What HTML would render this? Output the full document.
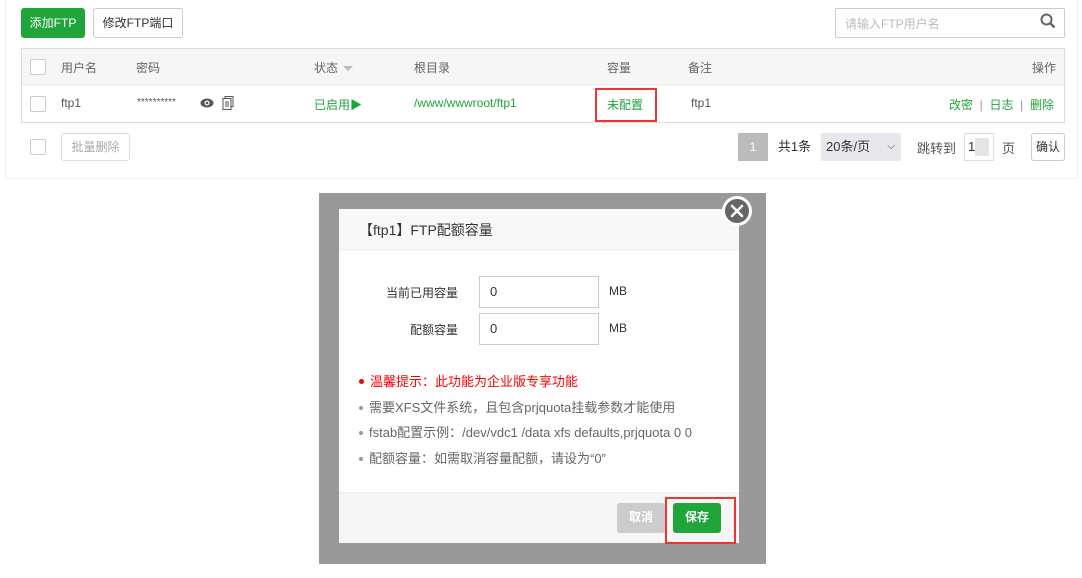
<!DOCTYPE html>
<html><head><meta charset="utf-8"><style>
*{box-sizing:border-box;margin:0;padding:0}
body{width:1082px;height:578px;background:#fff;font-family:"Liberation Sans","Noto Sans CJK SC",sans-serif;font-size:12px;color:#555;position:relative;overflow:hidden}
.a{position:absolute}
.panel{left:5px;top:-2px;width:1073px;height:181px;border:1px solid #eee;border-radius:3px;background:#fff}
.btn{position:absolute;height:30px;line-height:28px;border-radius:3px;font-size:12px;text-align:center}
.cb{position:absolute;width:16px;height:16px;border:1px solid #ccc;border-radius:2px;background:#fff}
.g{color:#20a53a}
.note{position:absolute;left:357px;font-size:13px;color:#666;line-height:18px}
.note b{display:inline-block;width:4px;height:4px;border-radius:50%;background:#999;vertical-align:middle;margin:0 6px 2px 2px}
</style></head><body>
<div class="a panel"></div>
<div class="btn" style="left:21px;top:8px;width:64px;background:#20a53a;color:#fff;border:1px solid #20a53a">添加FTP</div>
<div class="btn" style="left:93px;top:8px;width:90px;background:#fff;color:#333;border:1px solid #ccc">修改FTP端口</div>
<div class="a" style="left:835px;top:8px;width:230px;height:30px;border:1px solid #ccc;border-radius:2px"></div>
<div class="a" style="left:845px;top:15px;color:#bbb">请输入FTP用户名</div>
<svg class="a" style="left:1040px;top:13px" width="16" height="16" viewBox="0 0 16 16"><circle cx="6.5" cy="6.5" r="5" fill="none" stroke="#666" stroke-width="2"/><path d="M10 10l4.5 4.5" stroke="#666" stroke-width="2.4"/></svg>
<div class="a" style="left:21px;top:48px;width:1044px;height:75px;border:1px solid #ddd"></div>
<div class="a" style="left:22px;top:49px;width:1042px;height:36px;background:#f6f6f6;border-bottom:1px solid #e8e8e8"></div>
<div class="cb" style="left:30px;top:59px"></div>
<div class="a" style="left:61px;top:59px;color:#666">用户名</div>
<div class="a" style="left:136px;top:59px;color:#666">密码</div>
<div class="a" style="left:314px;top:59px;color:#666">状态</div>
<div class="a" style="left:343px;top:66px;border:5px solid transparent;border-top:5px solid #bbb;border-bottom:0"></div>
<div class="a" style="left:414px;top:59px;color:#666">根目录</div>
<div class="a" style="left:607px;top:59px;color:#666">容量</div>
<div class="a" style="left:688px;top:59px;color:#666">备注</div>
<div class="a" style="left:1032px;top:59px;color:#666">操作</div>
<div class="cb" style="left:30px;top:96px"></div>
<div class="a" style="left:61px;top:96px;color:#555">ftp1</div>
<div class="a" style="left:137px;top:97px;color:#555;font-size:10px">**********</div>
<svg class="a" style="left:200px;top:97px" width="14" height="12" viewBox="0 0 14 12"><ellipse cx="7" cy="6" rx="6.5" ry="4.5" fill="#555"/><circle cx="7" cy="6" r="2.5" fill="#fff"/><circle cx="7" cy="6" r="1.3" fill="#555"/></svg>
<svg class="a" style="left:222px;top:96px" width="12" height="14" viewBox="0 0 12 14"><rect x="3" y="0.5" width="8" height="10" fill="none" stroke="#555"/><rect x="1" y="2.5" width="8" height="11" fill="#fff" stroke="#555"/><path d="M3 6h4M3 8h4M3 10h4" stroke="#555"/></svg>
<div class="a g" style="left:314px;top:96px">已启用▶</div>
<div class="a g" style="left:414px;top:96px">/www/wwwroot/ftp1</div>
<div class="a" style="left:595px;top:88px;width:62px;height:34px;border:2px solid #e33"></div>
<div class="a g" style="left:607px;top:96px">未配置</div>
<div class="a" style="left:691px;top:96px;color:#555">ftp1</div>
<div class="a g" style="left:949px;top:96px">改密 <span style="color:#999">&nbsp;|&nbsp;</span> 日志 <span style="color:#999">&nbsp;|&nbsp;</span> 删除</div>
<div class="cb" style="left:30px;top:139px"></div>
<div class="btn" style="left:61px;top:133px;width:69px;height:28px;line-height:26px;border:1px solid #ddd;color:#aaa">批量删除</div>
<div class="a" style="left:738px;top:133px;width:30px;height:28px;background:#bbb;color:#fff;text-align:center;line-height:28px">1</div>
<div class="a" style="left:768px;top:133px;width:53px;height:28px;color:#333;text-align:center;line-height:28px;font-size:13px">共1条</div>
<div class="a" style="left:821px;top:133px;width:80px;height:28px;background:#e8e8ec;color:#333;line-height:28px;padding-left:5px;font-size:13px">20条/页 <span style="position:absolute;right:6px;font-size:10px">⌵</span></div>
<div class="a" style="left:917px;top:138px;color:#555;font-size:13px">跳转到</div>
<div class="a" style="left:964px;top:133px;width:30px;height:28px;border:1px solid #ddd;line-height:26px;padding-left:3px;color:#333;font-size:13px">1</div>
<div class="a" style="left:975px;top:138px;width:14px;height:18px;background:#e5e5e5"></div>
<div class="a" style="left:1002px;top:138px;color:#555;font-size:13px">页</div>
<div class="btn" style="left:1031px;top:133px;width:34px;height:28px;line-height:26px;border:1px solid #ccc;color:#333">确认</div>

<div class="a" style="left:319px;top:193px;width:447px;height:371px;background:#999"></div>
<div class="a" style="left:339px;top:209px;width:400px;height:334px;background:#fff"></div>
<div class="a" style="left:339px;top:209px;width:400px;height:41px;background:#f8f8f8;border-bottom:1px solid #eee"></div>
<div class="a" style="left:359px;top:220px;color:#333;font-size:14px">【ftp1】FTP配额容量</div>
<div class="a" style="left:722px;top:196px;width:30px;height:30px;border-radius:50%;background:#666;border:3px solid #fff"></div>
<svg class="a" style="left:722px;top:196px" width="30" height="30" viewBox="0 0 30 30"><path d="M10 10l10 10M20 10l-10 10" stroke="#fff" stroke-width="2.6" stroke-linecap="round"/></svg>
<div class="a" style="left:386px;top:284px;color:#333">当前已用容量</div>
<div class="a" style="left:410px;top:321px;color:#333">配额容量</div>
<div class="a" style="left:479px;top:276px;width:120px;height:32px;border:1px solid #ccc;line-height:30px;padding-left:10px;color:#333;font-size:13px">0</div>
<div class="a" style="left:479px;top:313px;width:120px;height:32px;border:1px solid #ccc;line-height:30px;padding-left:10px;color:#333;font-size:13px">0</div>
<div class="a" style="left:609px;top:284px;color:#333">MB</div>
<div class="a" style="left:609px;top:321px;color:#333">MB</div>
<div class="note" style="top:373px;color:#f00"><b style="background:#f00;width:5px;height:5px"></b>温馨提示：此功能为企业版专享功能</div>
<div class="note" style="top:399px"><b></b>需要XFS文件系统，且包含prjquota挂载参数才能使用</div>
<div class="note" style="top:424px"><b></b>fstab配置示例：/dev/vdc1 /data xfs defaults,prjquota 0 0</div>
<div class="note" style="top:450px"><b></b>配额容量：如需取消容量配额，请设为“0”</div>
<div class="a" style="left:339px;top:492px;width:400px;height:51px;background:#f6f6f6;border-top:1px solid #eee"></div>
<div class="btn" style="left:617px;top:503px;width:48px;background:#ccc;color:#fff;font-weight:bold">取消</div>
<div class="btn" style="left:673px;top:503px;width:48px;background:#20a53a;color:#fff;font-weight:bold">保存</div>
<div class="a" style="left:665px;top:497px;width:71px;height:47px;border:2px solid #e33"></div>
</body></html>
